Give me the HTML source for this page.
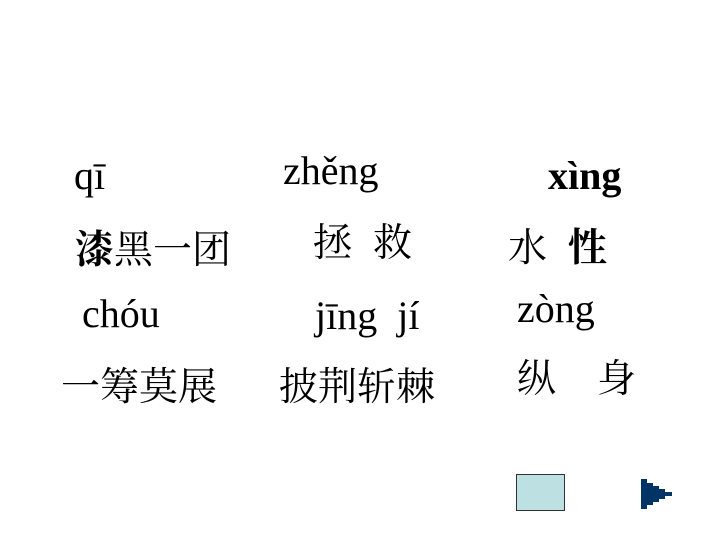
<!DOCTYPE html>
<html><head><meta charset="utf-8"><style>
html,body{margin:0;padding:0;background:#fff;width:720px;height:540px;overflow:hidden;position:relative}
.t{position:absolute;font-size:40px;line-height:1;white-space:pre;color:#000;font-family:"Liberation Serif","Noto Serif CJK SC",serif}
.c{font-family:"Noto Serif CJK SC","WenQuanYi Zen Hei",serif;font-size:39px}
b{font-weight:bold}
</style></head><body>
<div class="t" style="left:74px;top:156px">qī</div>
<div class="t" style="left:283px;top:151px">zhěng</div>
<div class="t" style="left:548px;top:156px;font-weight:bold">xìng</div>
<div class="t c" style="left:75px;top:228px"><b>漆</b>黑一团</div>
<div class="t c" style="left:313px;top:221px">拯</div>
<div class="t c" style="left:373px;top:221px">救</div>
<div class="t c" style="left:508px;top:226px">水</div>
<div class="t c" style="left:568px;top:226px"><b>性</b></div>
<div class="t" style="left:82px;top:294px">chóu</div>
<div class="t" style="left:315px;top:296px">jīng  jí</div>
<div class="t" style="left:517px;top:289px">zòng</div>
<div class="t c" style="left:61px;top:365px">一筹莫展</div>
<div class="t c" style="left:279px;top:365px">披荆斩棘</div>
<div class="t c" style="left:517px;top:357px">纵</div>
<div class="t c" style="left:597px;top:357px">身</div>
<div style="position:absolute;left:516px;top:474px;width:47px;height:35px;background:#bde0e3;border:1px solid #333"></div>
<svg style="position:absolute;left:641px;top:479px" width="32" height="31" viewBox="0 0 32 31">
<polygon points="0,0 6,0 6,4 12,4 12,7 18,7 18,10 24,10 24,13 31,13 31,17 24,17 24,20 18,20 18,23 12,23 12,26 6,26 6,30 0,30" fill="#003366"/>
</svg>
</body></html>
